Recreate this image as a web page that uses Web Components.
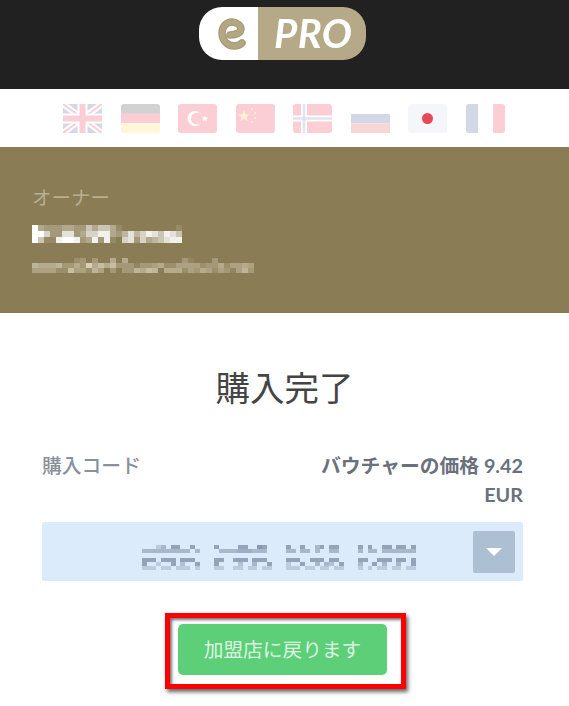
<!DOCTYPE html>
<html lang="ja">
<head>
<meta charset="utf-8">
<title>購入完了</title>
<style>
  html, body { margin: 0; padding: 0; background: #fff; }
  body { font-family: Lato, "Noto Sans CJK JP", sans-serif; }
</style>
</head>
<body>
<voucher-page>
  <pro-header slot="header"></pro-header>
  <flag-bar slot="flags"></flag-bar>
  <owner-band slot="owner" label="オーナー"></owner-band>
  <voucher-done slot="main" title-text="購入完了" code-label="購入コード" price="バウチャーの価格 9.42 EUR" action="加盟店に戻ります"></voucher-done>
</voucher-page>

<script>
// Pixelated (redacted) text, drawn from rows of intensity digits 0-9
class MosaicBlock extends HTMLElement {
  connectedCallback() {
    const cw = Number(this.getAttribute('cw') || 6);
    const ch = Number(this.getAttribute('ch') || 6);
    const color = this.getAttribute('color') || '#fff';
    const rows = this.getAttribute('rows').split(' ');
    const cols = Math.max(...rows.map(r => r.length));
    let rects = '';
    rows.forEach((row, y) => {
      [...row].forEach((v, x) => {
        if (v !== '0') rects += `<rect x="${x * cw}" y="${y * ch}" width="${cw}" height="${ch}" fill="${color}" opacity="${Number(v) / 9}"/>`;
      });
    });
    this.attachShadow({mode: 'open'}).innerHTML = `
      <style>:host{display:block;line-height:0}</style>
      <svg width="${cols * cw}" height="${rows.length * ch}" shape-rendering="crispEdges">${rects}</svg>`;
  }
}
customElements.define('mosaic-block', MosaicBlock);

class VoucherPage extends HTMLElement {
  constructor() {
    super();
    this.attachShadow({mode: 'open'}).innerHTML = `
      <style>
        :host{display:flex;flex-direction:column;width:569px;height:706px;overflow:hidden;background:#fff}
      </style>
      <slot name="header"></slot>
      <slot name="flags"></slot>
      <slot name="owner"></slot>
      <slot name="main"></slot>`;
  }
}
customElements.define('voucher-page', VoucherPage);

class ProHeader extends HTMLElement {
  constructor() {
    super();
    this.attachShadow({mode: 'open'}).innerHTML = `
      <style>
        :host{display:flex;justify-content:center;height:89px;padding:7px 4px 0 0;box-sizing:border-box;background:#212121}
        .logo{display:flex;width:167px;height:53px;border-radius:23px;overflow:hidden;filter:blur(.5px)}
        .left{width:59px;background:#fff;display:flex;align-items:center;padding-left:19px;box-sizing:border-box}
        .right{flex:1;background:#b6a987;color:#fff;font:italic 700 40px/53px Lato,"Liberation Sans",sans-serif;padding-left:16px;letter-spacing:.5px}
      </style>
      <div class="logo">
        <div class="left">
          <svg width="28" height="35" viewBox="0 0 28 35" fill="none" stroke-linecap="round" stroke-linejoin="round">
            <path d="M12 19 C17 19 23 17 23 13 C23 9 18 6 14 6 C8 6 4 11 4 17 C4 25 10 30 16 30 C19 30 22 29 24 27" stroke="#a89b76" stroke-width="7.500"/>
            <path d="M12 19 C17 19 23 17 23 13 C23 9 18 6 14 6 C8 6 4 11 4 17 C4 25 10 30 16 30 C19 30 22 29 24 27" stroke="#b3a683" stroke-width="5"/>
          </svg>
        </div>
        <div class="right">PRO</div>
      </div>`;
  }
}
customElements.define('pro-header', ProHeader);

const FLAGS = {
  uk: `<rect width="39" height="29" fill="#2b3f8c"/><path d="M0 0L39 29M39 0L0 29" stroke="#fff" stroke-width="6"/><path d="M0 0L39 29M39 0L0 29" stroke="#e8112d" stroke-width="2"/><path d="M19.500 0V29M0 14.500H39" stroke="#fff" stroke-width="10"/><path d="M19.500 0V29M0 14.500H39" stroke="#e8112d" stroke-width="6"/>`,
  de: `<rect width="39" height="10" fill="#222"/><rect y="9.500" width="39" height="10" fill="#e8112d"/><rect y="19" width="39" height="10" fill="#ffd83d"/>`,
  tr: `<rect width="39" height="29" fill="#e8112d"/><circle cx="17" cy="14.500" r="7.500" fill="#fff"/><circle cx="19" cy="14.500" r="6" fill="#e8112d"/><path d="M27 11.500l.9 2.100 2.300.2-1.700 1.500.5 2.200-2-1.200-2 1.200.5-2.200-1.700-1.500 2.300-.2z" fill="#fff"/>`,
  cn: `<rect width="39" height="29" fill="#e8112d"/><path d="M8 6l1.500 4.200 4.500.1-3.600 2.700 1.300 4.300L8 14.800l-3.700 2.500 1.300-4.300L2 10.300l4.500-.1z" fill="#ffb52e"/><circle cx="16" cy="5" r="1" fill="#ffb52e"/><circle cx="19" cy="9" r="1" fill="#ffb52e"/><circle cx="19" cy="14" r="1" fill="#ffb52e"/><circle cx="16" cy="18" r="1" fill="#ffb52e"/>`,
  no: `<rect width="39" height="29" fill="#e8112d"/><path d="M11 0V29M0 14.500H39" stroke="#fff" stroke-width="6"/><path d="M11 0V29M0 14.500H39" stroke="#6a7bb5" stroke-width="2.500"/>`,
  ru: `<rect y="10" width="39" height="9.500" fill="#2b3f8c"/><rect y="19.500" width="39" height="9.500" fill="#d83a3a"/>`,
  jp: `<rect width="39" height="29" fill="#eceef6"/>`,
  fr: `<rect width="12" height="29" fill="#2b3f8c"/><rect x="27" width="12" height="29" fill="#e8112d"/>`
};

class FlagBar extends HTMLElement {
  constructor() {
    super();
    const items = Object.keys(FLAGS).map(k => `
      <svg width="39" height="29" viewBox="0 0 39 29" class="${k}">
        <defs><clipPath id="c-${k}"><rect width="39" height="29" rx="${k === 'uk' || k === 'ru' ? 0 : 3}"/></clipPath></defs>
        <g clip-path="url(#c-${k})">${FLAGS[k]}</g>
      </svg>`).join('');
    this.attachShadow({mode: 'open'}).innerHTML = `
      <style>
        :host{display:flex;height:58px;background:#fff;padding:15px 0 0 63px;box-sizing:border-box;gap:18.500px;align-items:flex-start}
        svg{opacity:.2;flex:none;filter:blur(.4px)}
        .jp-wrap{position:relative;width:39px;height:29px;flex:none}
        .dot{position:absolute;left:14px;top:9px;width:11px;height:11px;border-radius:50%;background:#e8475a}
        .jp-wrap svg{opacity:.5}
      </style>
      ${items}`;
    const jp = this.shadowRoot.querySelector('svg.jp');
    const wrap = document.createElement('div');
    wrap.className = 'jp-wrap';
    jp.replaceWith(wrap);
    wrap.appendChild(jp);
    const dot = document.createElement('div');
    dot.className = 'dot';
    wrap.appendChild(dot);
  }
}
customElements.define('flag-bar', FlagBar);

class OwnerBand extends HTMLElement {
  connectedCallback() {
    this.attachShadow({mode: 'open'}).innerHTML = `
      <style>
        :host{display:block;height:166px;box-sizing:border-box;background:#8a7d56;padding:38px 0 0 32px}
        .label{font:400 19.500px/26px Lato,"Noto Sans CJK JP",sans-serif;color:#b8ae93}
        .name{margin-top:14px;filter:blur(.4px)}
        .mail{margin-top:15px;filter:blur(.6px)}
      </style>
      <div class="label">${this.getAttribute('label')}</div>
      <mosaic-block class="name" color="#ffffff" cw="6" ch="6" rows="9322233225355310000000001 9962277236688324746875875 9511899823828106726345788"></mosaic-block>
      <mosaic-block class="mail" color="#d8d0b8" cw="6" ch="5" rows="0000000230300505000000000310003000000 6555633539575733313345224444233524454 4444227442640303365760555243542431463"></mosaic-block>`;
  }
}
customElements.define('owner-band', OwnerBand);

class CodeBox extends HTMLElement {
  constructor() {
    super();
    this.attachShadow({mode: 'open'}).innerHTML = `
      <style>
        :host{display:flex;align-items:center;height:59px;background:#dcebfc;border-radius:2px;box-sizing:border-box;padding:0 8px 0 100px}
        .code{flex:1;display:flex;flex-direction:column;gap:5px;filter:blur(.4px);padding-top:12px}
        .toggle{width:42px;height:42px;background:#acbfd3;border-radius:2px;display:flex;align-items:center;justify-content:center}
        .toggle i{display:block;width:0;height:0;border-left:8.500px solid transparent;border-right:8.500px solid transparent;border-top:8.500px solid #fff}
      </style>
      <div class="code"><slot></slot></div>
      <div class="toggle"><i></i></div>`;
  }
}
customElements.define('code-box', CodeBox);

class VoucherDone extends HTMLElement {
  connectedCallback() {
    this.attachShadow({mode: 'open'}).innerHTML = `
      <style>
        :host{display:block;padding:0 46px 0 42px;font-family:Lato,"Noto Sans CJK JP",sans-serif}
        h1{margin:51px 0 0;text-align:center;font:400 34.500px/48px Lato,"Noto Sans CJK JP",sans-serif;color:#444;padding-left:4px}
        .row{display:flex;justify-content:space-between;margin-top:39px;font-size:19.800px;line-height:29px}
        .label{color:#8a919b;font-weight:500}
        .price{color:#6a717c;text-align:right;width:215px;font-weight:700}
        code-box{margin-top:13px}
        .action{display:flex;justify-content:center;margin-top:32px;padding-left:6px}
        .mark{border:5px solid #ff0000;padding:6px 14px 9px 8px;box-shadow:2px 3px 4px rgba(0,0,0,.6), inset 2px 2px 3px rgba(0,0,0,.55)}
        button{display:block;width:209px;height:51px;border:0;border-radius:5px;background:#5dcf78;color:#dcf5e1;font:400 19.700px/51px Lato,"Noto Sans CJK JP",sans-serif;padding:0}
      </style>
      <h1>${this.getAttribute('title-text')}</h1>
      <div class="row">
        <span class="label">${this.getAttribute('code-label')}</span>
        <span class="price">${this.getAttribute('price')}</span>
      </div>
      <code-box>
        <mosaic-block color="#7f8ea2" cw="4.800" ch="4" rows="000350770070000700007700870000700700570770000707007707707 555555555505000055556665550000550550500550000505505555555"></mosaic-block>
        <mosaic-block color="#7f8ea2" cw="4.800" ch="4" rows="777077707770000770077707770000777007770770000770077707707 700300704007000700004005007000300700505407000500705005007 333033033303000330033033033000333033033033000303033033033"></mosaic-block>
      </code-box>
      <div class="action">
        <div class="mark"><button>${this.getAttribute('action')}</button></div>
      </div>`;
  }
}
customElements.define('voucher-done', VoucherDone);
</script>
</body>
</html>
